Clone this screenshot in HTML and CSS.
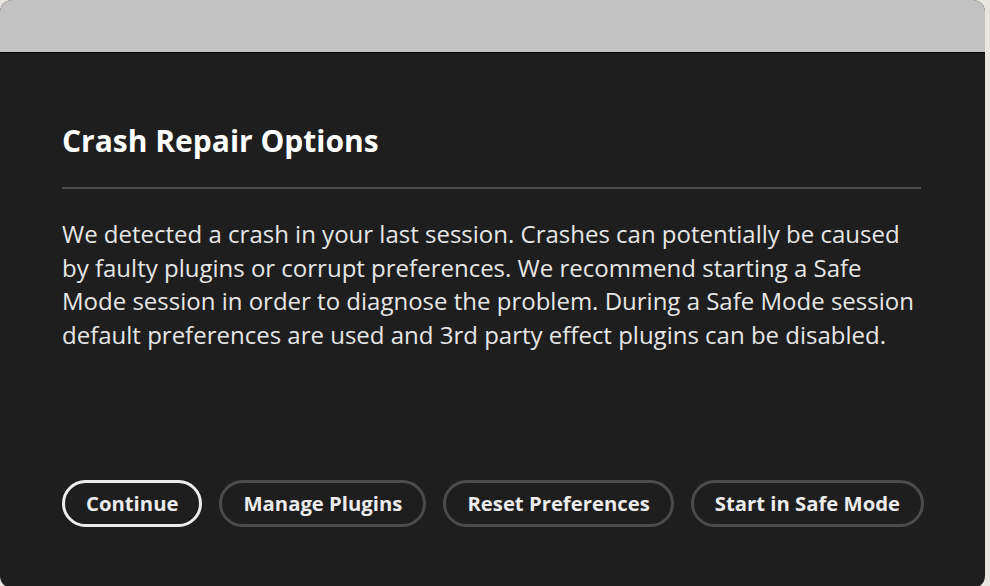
FILE: index.html
```html
<!DOCTYPE html>
<html>
<head>
<meta charset="utf-8">
<link rel="stylesheet" href="styles.css">
</head>
<body>
<div class="window">
  <div class="titlebar"></div>
  <div class="dialog">
    <h1 class="title">Crash Repair Options</h1>
    <div class="rule"></div>
    <p class="message">We detected a crash in your last session. Crashes can potentially be caused by faulty plugins or corrupt preferences. We recommend starting a Safe Mode session in order to diagnose the problem. During a Safe Mode session default preferences are used and 3rd party effect plugins can be disabled.</p>
    <div class="actions">
      <button class="btn btn-primary">Continue</button>
      <button class="btn">Manage Plugins</button>
      <button class="btn">Reset Preferences</button>
      <button class="btn">Start in Safe Mode</button>
    </div>
  </div>
</div>
</body>
</html>
```

FILE: styles.css
```css
html, body {
  margin: 0;
  padding: 0;
  width: 990px;
  height: 586px;
  overflow: hidden;
  background: #e9e5e1;
}
.window {
  width: 985px;
  height: 588px;
  border-radius: 12px;
  overflow: hidden;
  background: #1e1e1e;
  display: flex;
  flex-direction: column;
}
.titlebar {
  height: 52px;
  background: #c2c2c2;
  border-bottom: 1px solid #050505;
  flex: none;
}
.dialog {
  flex: 1;
  display: flex;
  flex-direction: column;
  padding: 0 62px 0 62px;
  font-family: "Open Sans", "Noto Sans", sans-serif;
  color: #e8e8e8;
}
.title {
  margin: 68px 0 0;
  font-size: 30px;
  font-weight: 700;
  line-height: 40px;
  color: #ffffff;
  letter-spacing: 0;
}
.rule {
  margin-top: 26px;
  width: 859px;
  height: 2px;
  background: #4e4e4e;
}
.message {
  margin: 28px 0 0;
  width: 861px;
  font-size: 24px;
  line-height: 33.7px;
  color: #e6e6e6;
}
.actions {
  margin-top: 128px;
  display: flex;
  gap: 17px;
}
.btn {
  flex: none;
  white-space: nowrap;
  height: 47px;
  padding: 0 21px;
  border: 3px solid #4b4b4b;
  border-radius: 24px;
  background: transparent;
  color: #ececec;
  font-family: "Open Sans", "Noto Sans", sans-serif;
  font-size: 20.3px;
  font-weight: 700;
}
.btn-primary {
  border-color: #ececec;
}
```
